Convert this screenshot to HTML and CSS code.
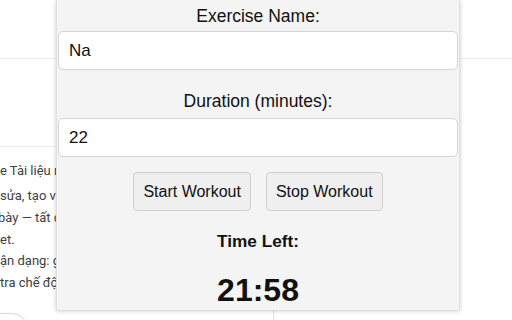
FILE: index.html
```html
<!DOCTYPE html>
<html lang="en">
<head>
<meta charset="utf-8">
<title>Workout Timer</title>
<link rel="stylesheet" href="styles.css">
</head>
<body>
<div class="page">
  <header class="topbar"></header>
  <section class="card">
    <div class="line first">e Tài liệu mới</div>
    <div class="line">sửa, tạo văn bản</div>
    <div class="line cut">bày — tất cả</div>
    <div class="line">et.</div>
    <div class="line">ận dạng: google</div>
    <div class="line">tra chế độ xem</div>
    <div class="pill"></div>
  </section>
</div>

<div class="popup">
  <label class="label first-label" for="name">Exercise Name:</label>
  <input class="field first-field" id="name" type="text" value="Na">
  <label class="label second-label" for="dur">Duration (minutes):</label>
  <input class="field second-field" id="dur" type="text" value="22">
  <div class="buttons">
    <button class="btn" type="button">Start Workout</button>
    <button class="btn" type="button">Stop Workout</button>
  </div>
  <div class="time-label">Time Left:</div>
  <div class="time">21:58</div>
</div>
</body>
</html>
```

FILE: styles.css
```css
html, body {
  margin: 0;
  padding: 0;
  background: #ffffff;
}
body {
  width: 512px;
  height: 320px;
  overflow: hidden;
  position: relative;
  font-family: "Liberation Sans", Arial, sans-serif;
}
.page {
  display: flex;
  flex-direction: column;
}
.topbar {
  height: 58px;
  border-bottom: 1px solid #ebebeb;
}
.card {
  margin-top: 87px;
  width: 273px;
  height: 160px;
  border-top: 1px solid #ebebeb;
  border-right: 1px solid #e3e3e3;
  padding-top: 13px;
  overflow: hidden;
  font-family: Roboto, "Noto Sans", sans-serif;
  font-size: 13px;
  color: #3c4043;
}
.line {
  white-space: nowrap;
  line-height: 21.75px;
}
.line.first {
  line-height: 22px;
  margin-bottom: 3px;
}
.line.cut {
  text-indent: -2px;
}
.pill {
  margin-top: 19px;
  margin-left: -24px;
  width: 50px;
  height: 30px;
  border: 1px solid #c6d9f7;
  border-radius: 16px;
}

.popup {
  position: absolute;
  top: 0;
  left: 56px;
  width: 400px;
  height: 310px;
  padding: 0 1px;
  background: #f4f4f4;
  border-left: 1px solid #e0e0e0;
  border-right: 1px solid #e0e0e0;
  box-shadow: 0 1px 4px rgba(0, 0, 0, 0.22);
  display: flex;
  flex-direction: column;
  align-items: center;
  color: #111;
}
.label {
  font-size: 17.5px;
  line-height: 20px;
}
.first-label { margin-top: 6px; }
.second-label { margin-top: 21px; }
.field {
  box-sizing: border-box;
  width: 400px;
  height: 39px;
  margin: 0;
  padding: 0 10px;
  border: 1px solid #d4d4d4;
  border-radius: 5px;
  background: #ffffff;
  font-family: "Liberation Sans", Arial, sans-serif;
  font-size: 17px;
  color: #111;
  outline: none;
}
.first-field { margin-top: 5px; }
.second-field { margin-top: 7px; }
.buttons {
  margin-top: 15px;
  display: flex;
  gap: 15px;
}
.btn {
  box-sizing: border-box;
  height: 39px;
  padding: 0 9px;
  border: 1px solid #d0d0d0;
  border-radius: 4px;
  background: #efefef;
  font-family: "Liberation Sans", Arial, sans-serif;
  font-size: 16px;
  color: #111;
}
.time-label {
  margin-top: 20px;
  font-weight: bold;
  font-size: 17.2px;
  line-height: 20px;
}
.time {
  margin-top: 20px;
  font-weight: bold;
  font-size: 32px;
  line-height: 38px;
}
```
